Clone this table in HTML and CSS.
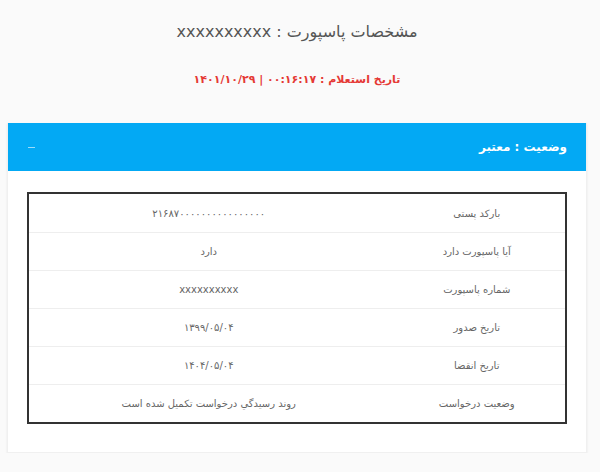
FILE: index.html
```html
<!DOCTYPE html>
<html lang="fa" dir="rtl">
<head>
<meta charset="utf-8">
<link rel="stylesheet" href="styles.css">
</head>
<body>
<div class="page">
  <h1 class="title">مشخصات پاسپورت : xxxxxxxxxx</h1>
  <p class="inquiry">تاریخ استعلام : ۰۰:۱۶:۱۷ | ۱۴۰۱/۱۰/۲۹</p>
  <div class="card">
    <div class="card-head">
      <span class="status">وضعیت : معتبر</span>
      <span class="toggle"></span>
    </div>
    <div class="card-body">
      <table class="info">
        <tr><td class="label">بارکد پستی</td><td class="value">۲۱۶۸۷۰۰۰۰۰۰۰۰۰۰۰۰۰۰۰۰</td></tr>
        <tr><td class="label">آیا پاسپورت دارد</td><td class="value">دارد</td></tr>
        <tr><td class="label">شماره پاسپورت</td><td class="value">xxxxxxxxxx</td></tr>
        <tr><td class="label">تاریخ صدور</td><td class="value">۱۳۹۹/۰۵/۰۴</td></tr>
        <tr><td class="label">تاریخ انقضا</td><td class="value">۱۴۰۴/۰۵/۰۴</td></tr>
        <tr><td class="label">وضعیت درخواست</td><td class="value">روند رسیدگي درخواست تکمیل شده است</td></tr>
      </table>
    </div>
  </div>
</div>
</body>
</html>
```
FILE: styles.css
```css
html, body {
  margin: 0;
  padding: 0;
  background: #fafafa;
}
body {
  font-family: "DejaVu Sans", "Noto Sans", sans-serif;
  color: #555;
}
.page {
  margin: 0 13px 0 7px;
  padding-top: 20px;
}
.title {
  margin: 0;
  text-align: center;
  font-size: 16px;
  font-weight: normal;
  color: #555;
  line-height: 24px;
}
.inquiry {
  margin: 27px 0 0;
  text-align: center;
  font-size: 11px;
  font-weight: bold;
  color: #e53935;
  line-height: 18px;
}
.card {
  margin-top: 34px;
  background: #fff;
  box-shadow: 0 1px 2px rgba(0,0,0,0.08);
  border: 1px solid #f0f0f0;
  border-top: 0;
}
.card-head {
  height: 48px;
  background: #03a9f4;
  display: flex;
  align-items: center;
  justify-content: space-between;
  padding: 0 19px 0 20px;
  color: #fff;
}
.status {
  font-size: 12px;
  font-weight: bold;
}
.toggle {
  width: 7px;
  height: 1px;
  background: rgba(255,255,255,0.6);
}
.card-body {
  padding: 21px 19px 28px 19px;
}
.info {
  width: 100%;
  border-collapse: collapse;
  border: 2px solid #333;
}
.info td {
  height: 37px;
  padding: 0;
  text-align: center;
  font-size: 10px;
  color: #666;
  border-top: 1px solid #eee;
}
.info tr:first-child td {
  border-top: 0;
  height: 38px;
}
.info .label {
  width: 33%;
}
```
